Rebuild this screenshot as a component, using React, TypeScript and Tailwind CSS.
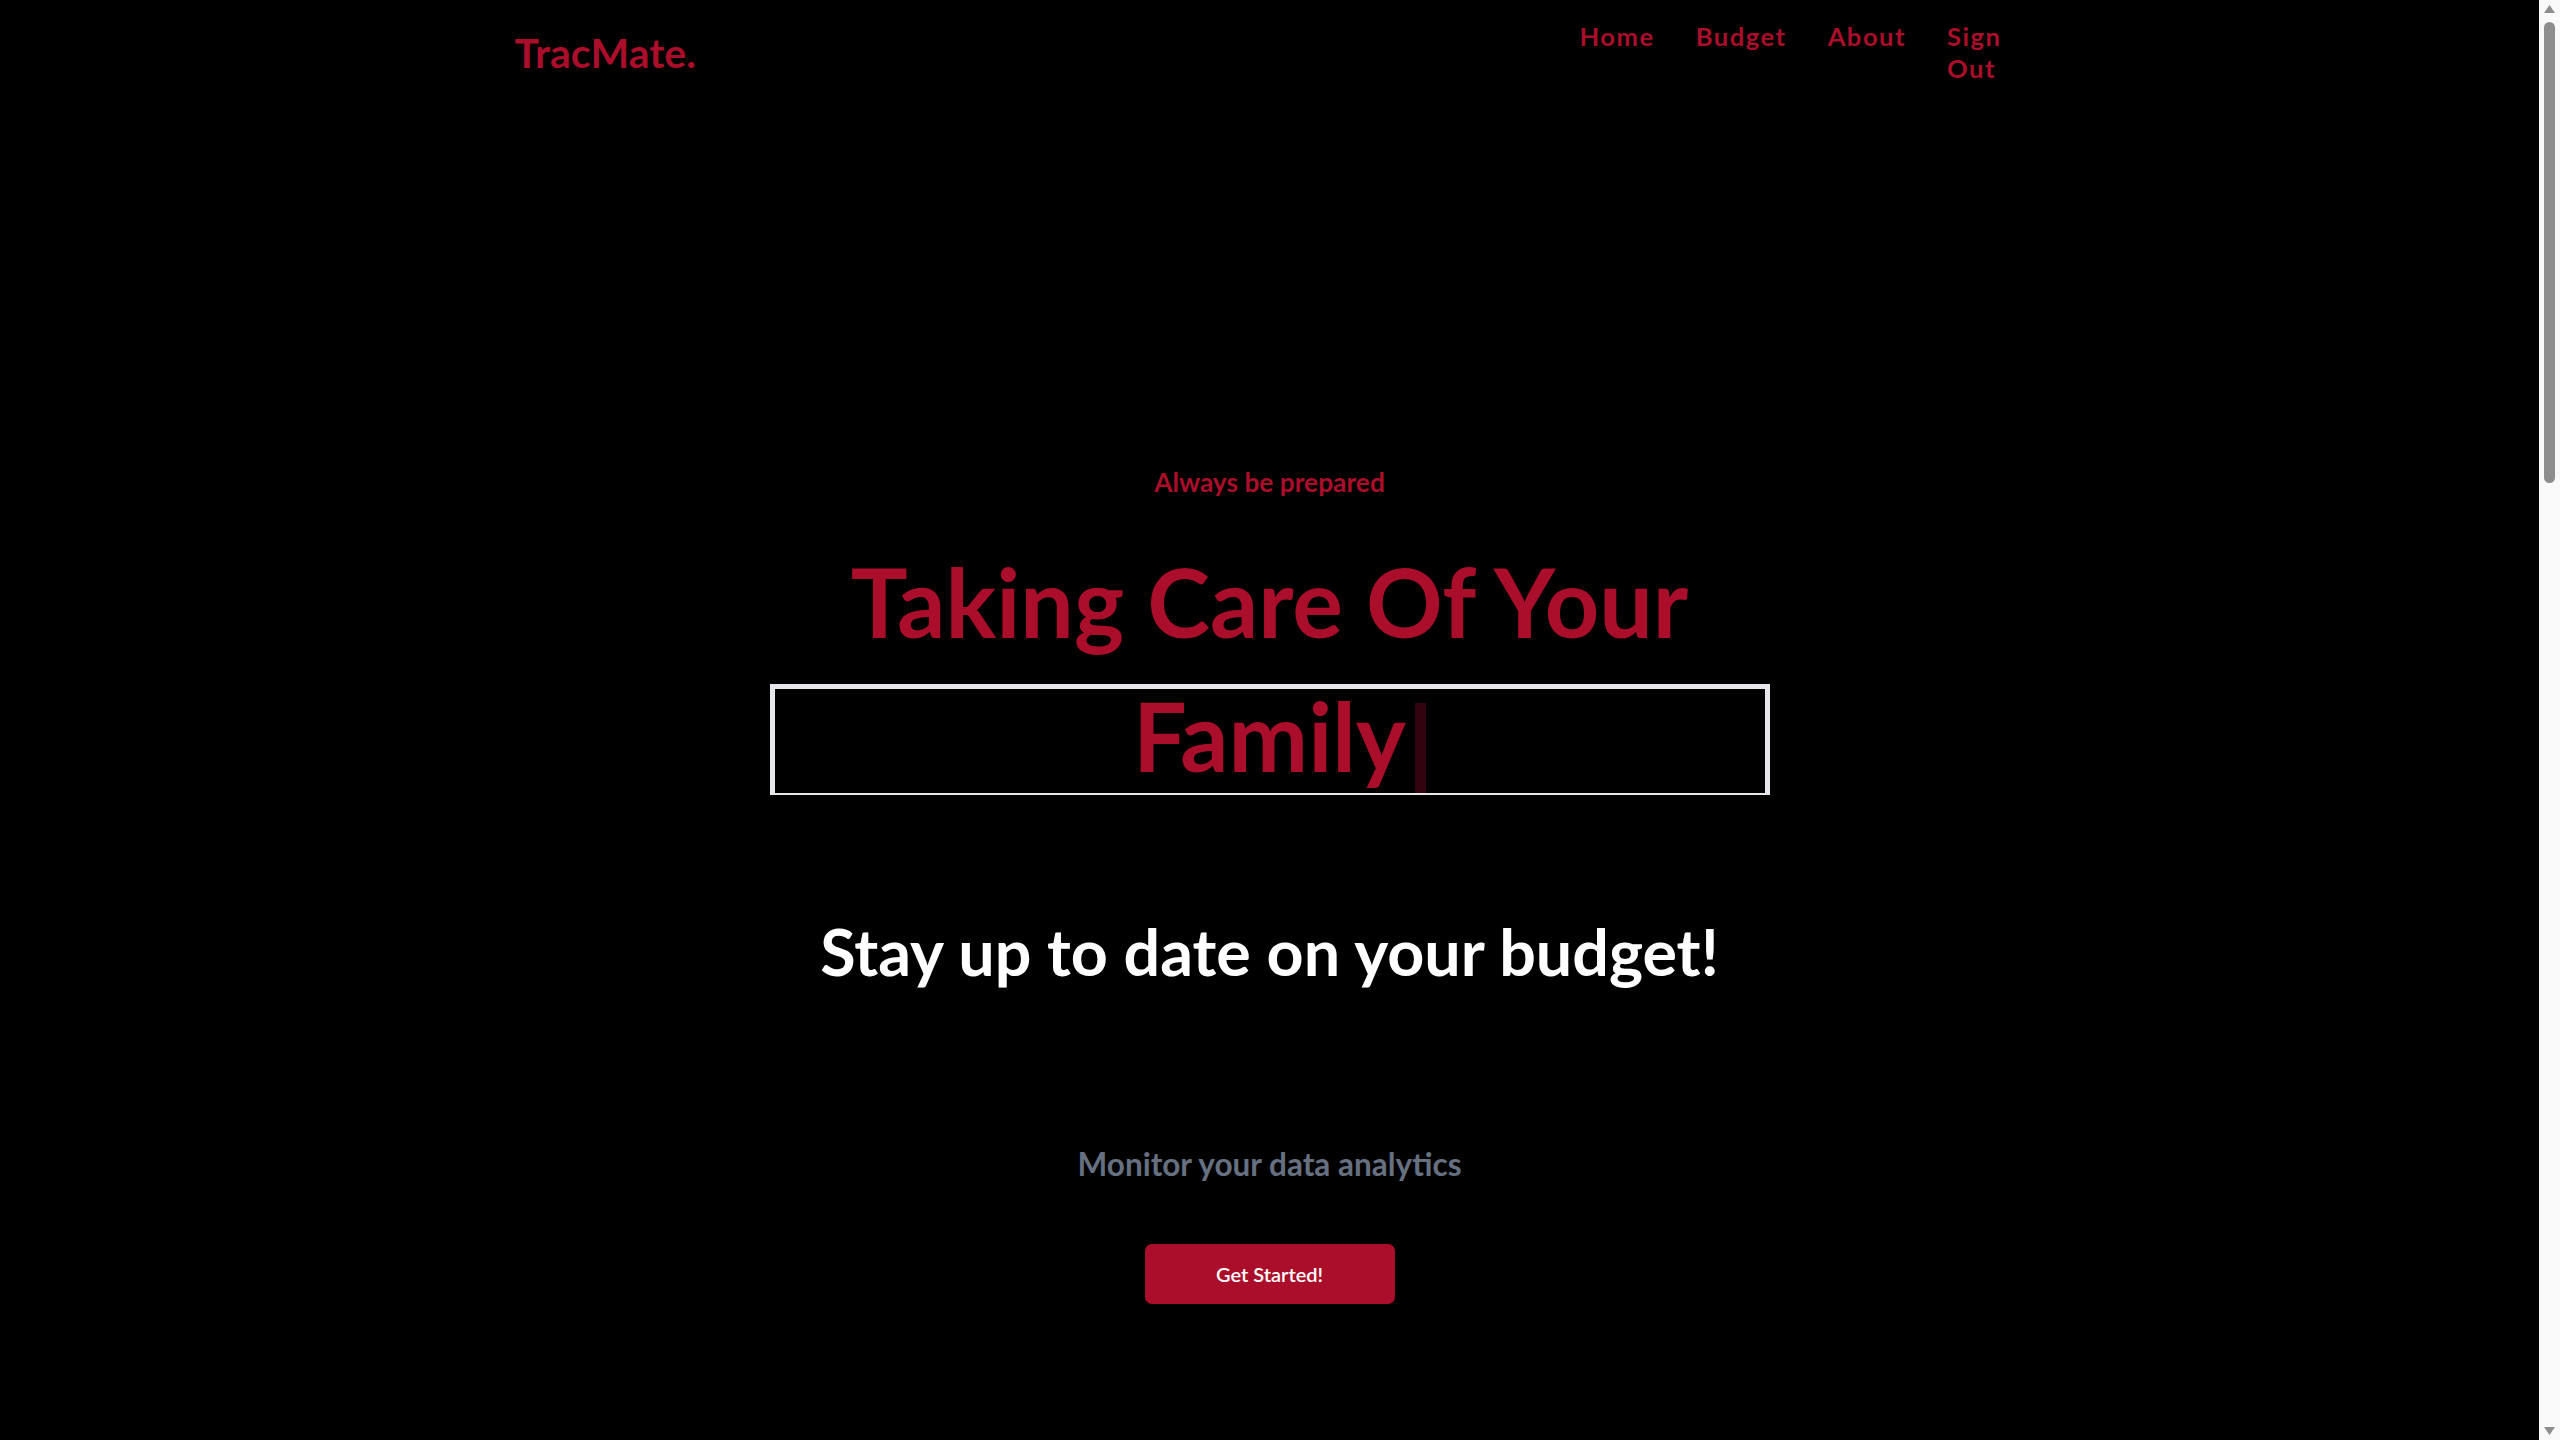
import React from "react";

const navLinks = ["Home", "Budget", "About", "Sign Out"];

function Header() {
  return (
    <header className="mx-auto flex w-[1510px] items-start justify-between pt-[20px]">
      <a href="#" className="mt-[9px] text-[41px] leading-[48px] font-bold text-[#ab0e2a]">
        TracMate.
      </a>
      <nav className="pr-[23px]">
        <ul className="flex items-start gap-[41px]">
          {navLinks.map((link, i) => (
            <li
              key={link}
              className={
                i === navLinks.length - 1
                  ? "w-min text-[25.6px] leading-[32px] font-bold tracking-[1.5px] text-[#ab0e2a]"
                  : "text-[25.6px] leading-[32px] font-bold tracking-[1.5px] text-[#ab0e2a]"
              }
            >
              <a href="#">{link}</a>
            </li>
          ))}
        </ul>
      </nav>
    </header>
  );
}

function Hero() {
  return (
    <section className="flex flex-col items-center text-center">
      <p className="mt-[382px] text-[26.3px] leading-[32px] font-bold text-[#ab0e2a]">
        Always be prepared
      </p>
      <h1 className="mt-[55px] text-[95px] leading-[96px] font-bold text-[#ab0e2a]">
        Taking Care Of Your
      </h1>
      <div className="mt-[35px] h-[111px] w-[1000px] border-x-[5px] border-t-[5px] border-b-2 border-[#e5e7eb] text-[95px] leading-[93px] font-bold text-[#ab0e2a]">
        <span className="relative inline-block h-[93px]">
          Family
          <span className="absolute top-[14px] left-full ml-[9px] h-[90px] w-[11px] bg-[#33040f]" />
        </span>
      </div>
      <h2 className="mt-[120px] text-[64.6px] leading-[72px] font-bold text-white">
        Stay up to date on your budget!
      </h2>
      <p className="mt-[157px] text-[31.5px] leading-[40px] font-bold text-[#667080]">
        Monitor your data analytics
      </p>
      <button className="mt-[60px] flex h-[60px] w-[250px] items-center justify-center rounded-[7px] bg-[#ab0e2a] text-[20px] leading-[24px] font-semibold text-white">
        Get Started!
      </button>
    </section>
  );
}

function Scrollbar() {
  return (
    <div className="fixed top-0 right-0 flex h-screen w-[21px] flex-col items-center bg-[#f9f9f9]">
      <svg width="11" height="8" viewBox="0 0 11 8" className="mt-[5px]">
        <path d="M5.5 0 L11 8 L0 8 Z" fill="#8d8d8d" />
      </svg>
      <div className="mt-[9px] h-[461px] w-[11px] rounded-full bg-[#8d8d8d]" />
      <svg width="11" height="8" viewBox="0 0 11 8" className="mt-auto mb-[5px]">
        <path d="M0 0 L11 0 L5.5 8 Z" fill="#8d8d8d" />
      </svg>
    </div>
  );
}

export default function App() {
  return (
    <div className="min-h-[4350px] bg-black [font-family:Lato,sans-serif]">
      <div className="mr-[21px]">
        <Header />
        <Hero />
      </div>
      <Scrollbar />
    </div>
  );
}
